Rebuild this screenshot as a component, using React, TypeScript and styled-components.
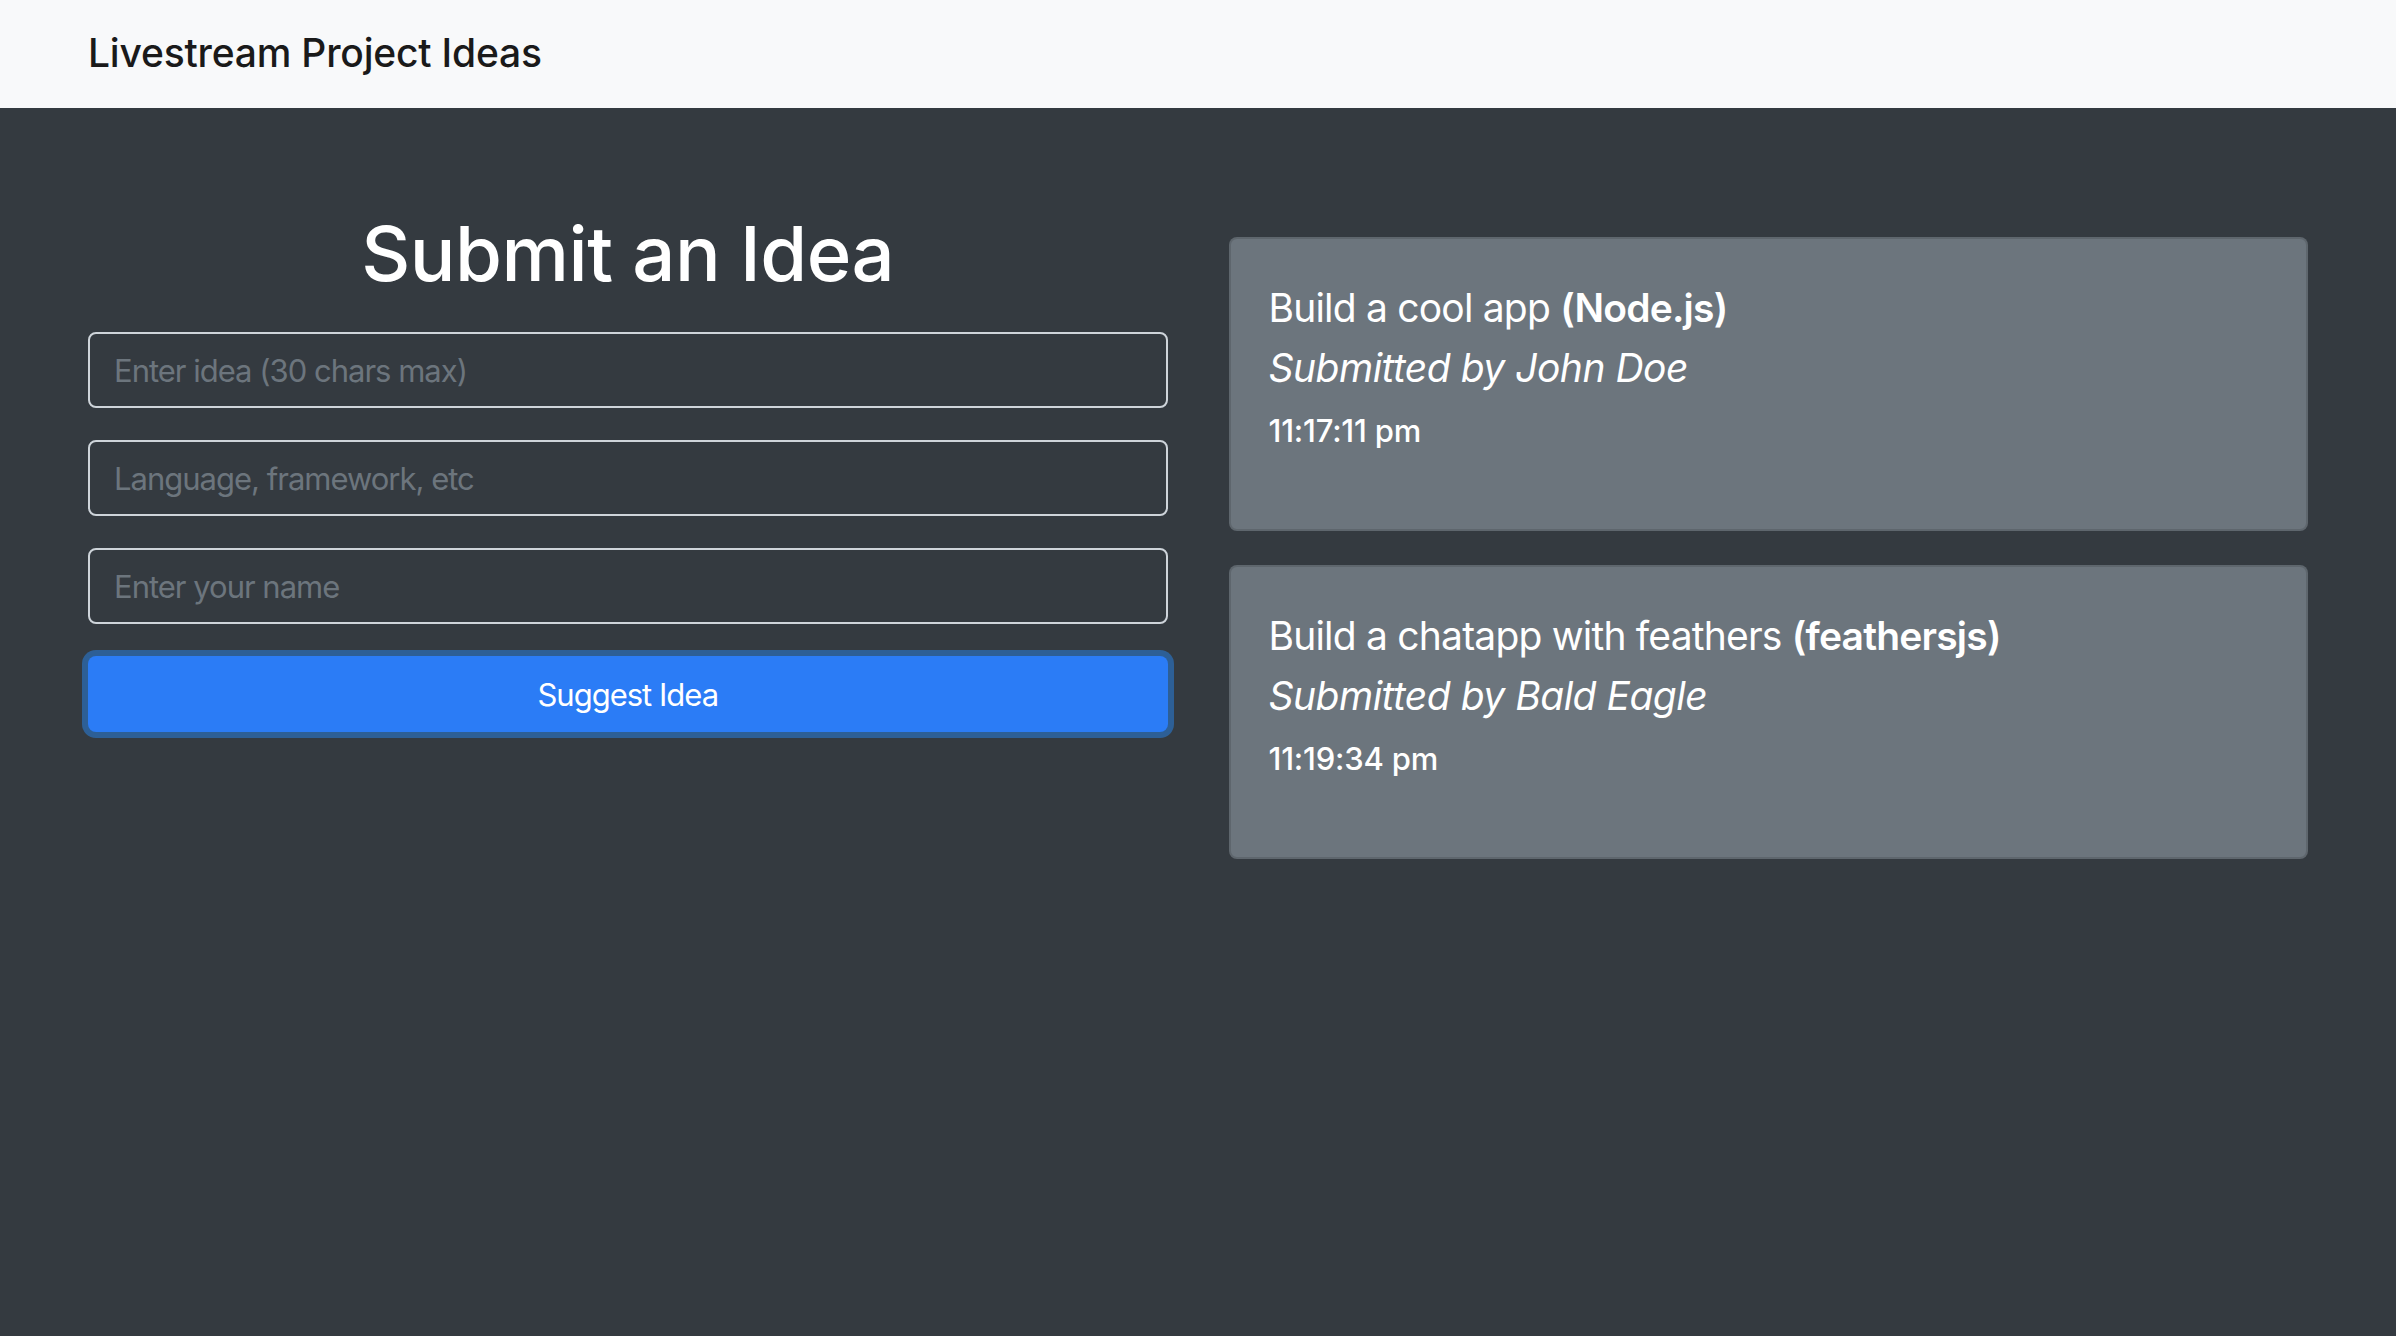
import React from "react";
import styled, { createGlobalStyle } from "styled-components";

const GlobalStyle = createGlobalStyle`
  html, body {
    margin: 0;
    padding: 0;
    background: #343a40;
    font-family: Inter, "Liberation Sans", sans-serif;
  }
  * { box-sizing: border-box; }
`;

const Page = styled.div`
  min-height: 1336px;
  background: #343a40;
  display: flex;
  flex-direction: column;
`;

const NavBar = styled.header`
  height: 108px;
  background: #f8f9fa;
  display: flex;
  align-items: center;
  padding: 0 88px;
`;

const Brand = styled.div`
  font-size: 39px;
  font-weight: 500;
  color: #1a1a1a;
  line-height: 1;
  letter-spacing: -0.2px;
  margin-top: -3px;
`;

const Main = styled.main`
  display: grid;
  grid-template-columns: 1fr 1fr;
  column-gap: 61px;
  padding: 100px 88px 0;
  align-items: start;
`;

const FormColumn = styled.section`
  display: flex;
  flex-direction: column;
  gap: 32px;
`;

const Heading = styled.h1`
  margin: 0 0 1px;
  text-align: center;
  color: #ffffff;
  font-size: 76px;
  font-weight: 500;
  line-height: 91px;
  letter-spacing: -0.5px;
`;

const Input = styled.input`
  height: 76px;
  width: 100%;
  padding: 0 24px;
  background: transparent;
  border: 2px solid #ced4da;
  border-radius: 8px;
  color: #ffffff;
  font-family: Inter, "Liberation Sans", sans-serif;
  font-size: 31px;
  letter-spacing: -1px;
  outline: none;
  &::placeholder {
    color: #6c757d;
  }
`;

const SubmitButton = styled.button`
  height: 76px;
  width: 100%;
  border: none;
  border-radius: 8px;
  background: #2b7cf6;
  color: #ffffff;
  font-family: Inter, "Liberation Sans", sans-serif;
  font-size: 31px;
  letter-spacing: -1px;
  box-shadow: 0 0 0 6px rgba(38, 143, 255, 0.45);
  cursor: pointer;
`;

const IdeaColumn = styled.section`
  display: flex;
  flex-direction: column;
  gap: 34px;
  padding-top: 29px;
`;

const Card = styled.article`
  background: #6c757d;
  border: 2px solid rgba(0, 0, 0, 0.12);
  border-radius: 8px;
  padding: 44px 38px 77px;
  color: #ffffff;
  display: flex;
  flex-direction: column;
`;

const IdeaTitle = styled.div`
  font-size: 39px;
  line-height: 50px;
  font-weight: 400;
  letter-spacing: -0.8px;
  strong { font-weight: 600; }
`;

const Author = styled.div`
  font-size: 39px;
  line-height: 50px;
  font-style: italic;
  letter-spacing: -0.5px;
  margin-top: 10px;
`;

const Time = styled.div`
  font-size: 31px;
  line-height: 42px;
  font-weight: 500;
  letter-spacing: -0.2px;
  margin-top: 17px;
`;

const ideas = [
  { text: "Build a cool app", tech: "Node.js", name: "John Doe", time: "11:17:11 pm" },
  { text: "Build a chatapp with feathers", tech: "feathersjs", name: "Bald Eagle", time: "11:19:34 pm" },
];

export default function App() {
  return (
    <Page>
      <GlobalStyle />
      <NavBar>
        <Brand>Livestream Project Ideas</Brand>
      </NavBar>
      <Main>
        <FormColumn>
          <Heading>Submit an Idea</Heading>
          <Input placeholder="Enter idea (30 chars max)" />
          <Input placeholder="Language, framework, etc" />
          <Input placeholder="Enter your name" />
          <SubmitButton>Suggest Idea</SubmitButton>
        </FormColumn>
        <IdeaColumn>
          {ideas.map((idea) => (
            <Card key={idea.time}>
              <IdeaTitle>
                {idea.text} <strong>({idea.tech})</strong>
              </IdeaTitle>
              <Author>Submitted by {idea.name}</Author>
              <Time>{idea.time}</Time>
            </Card>
          ))}
        </IdeaColumn>
      </Main>
    </Page>
  );
}
